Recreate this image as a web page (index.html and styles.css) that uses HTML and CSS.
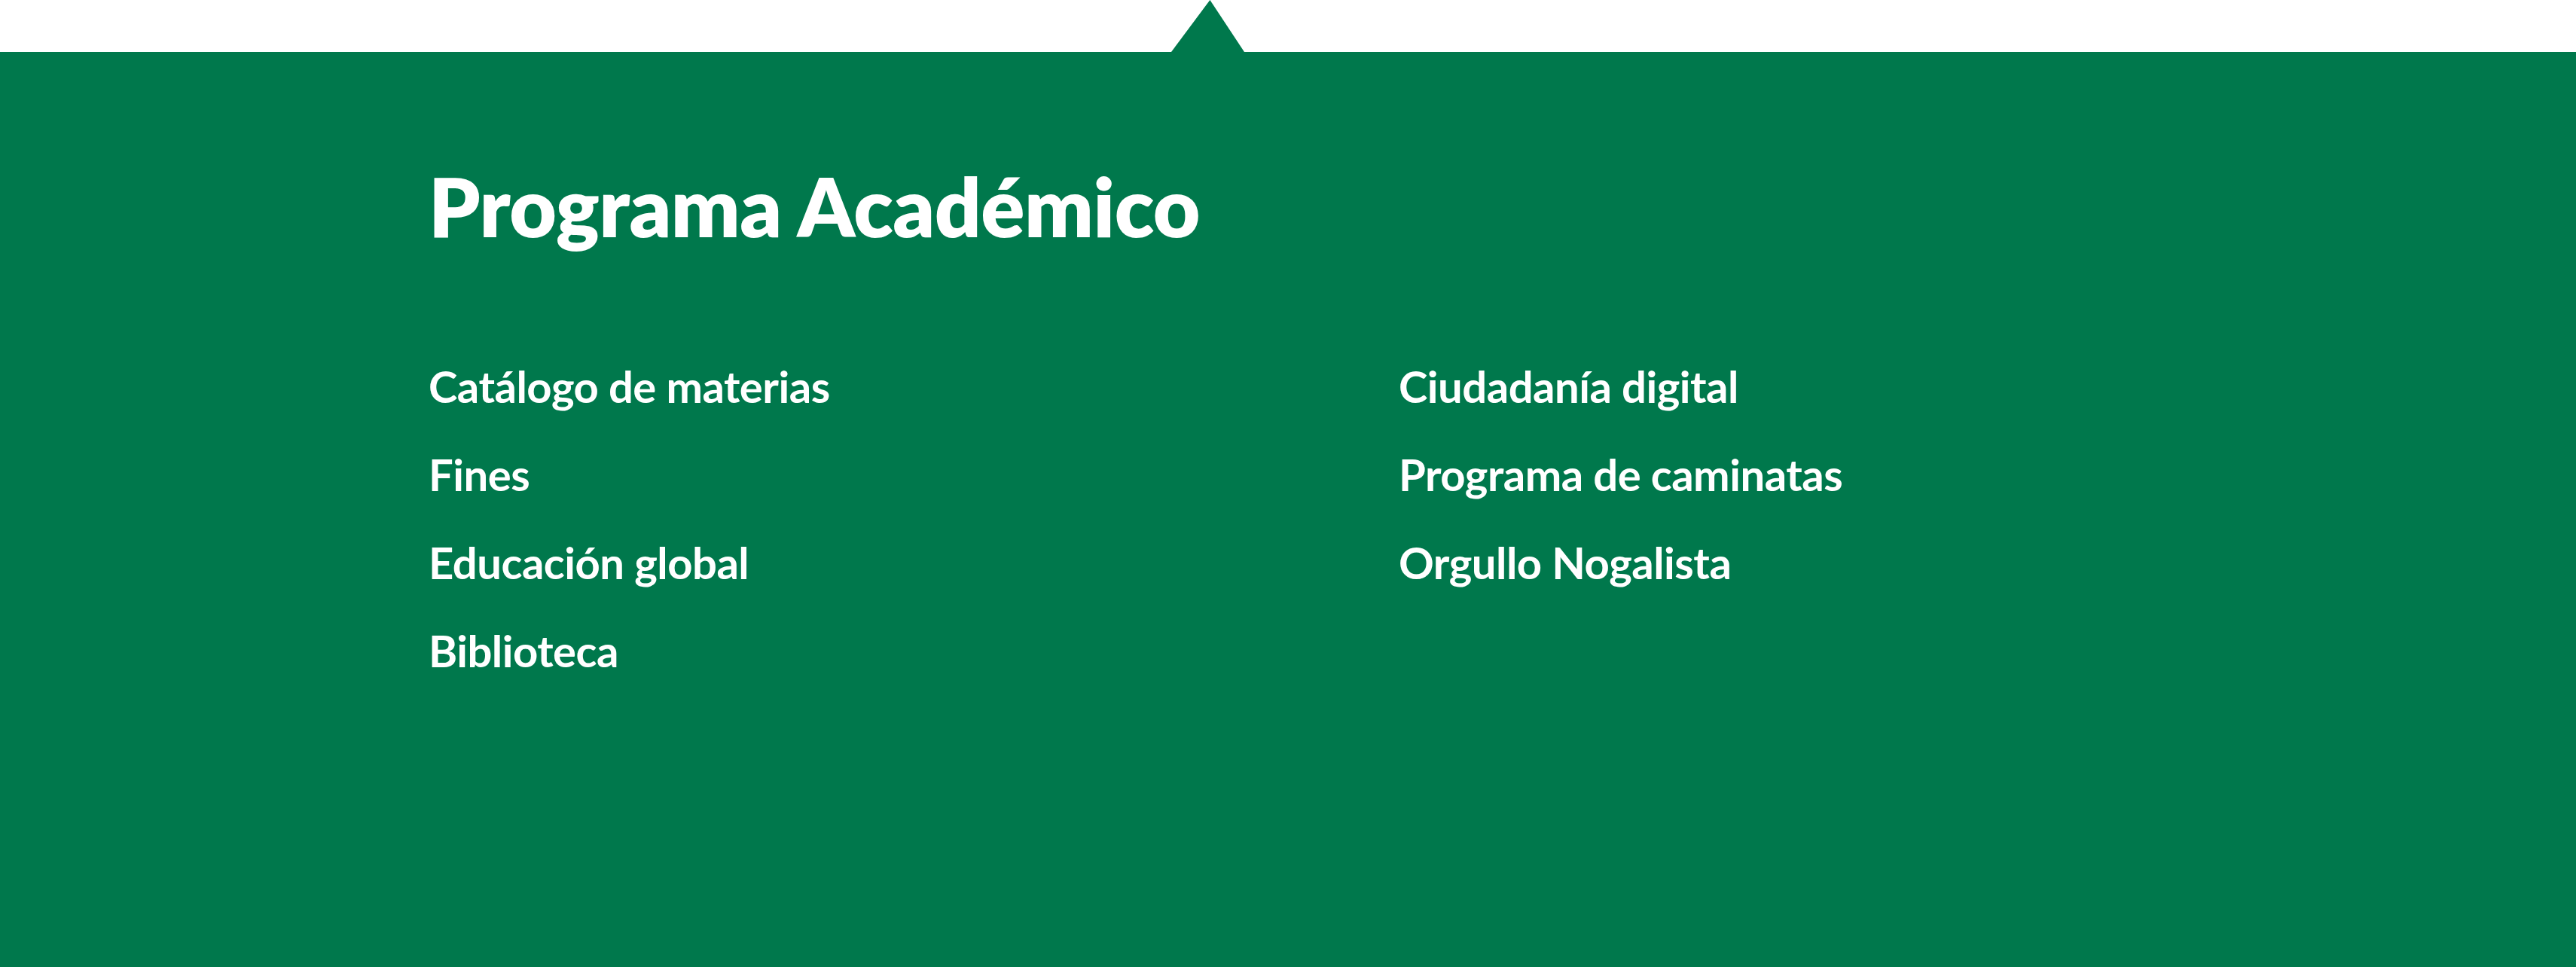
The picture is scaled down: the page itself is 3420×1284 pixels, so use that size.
FILE: index.html
```html
<!DOCTYPE html>
<html lang="es">
<head>
<meta charset="utf-8">
<title>Programa Académico</title>
<link rel="stylesheet" href="styles.css">
</head>
<body>
<div class="topbar">
  <span class="notch"></span>
</div>
<section class="panel">
  <div class="inner">
    <h2 class="title">Programa Académico</h2>
    <div class="links">
      <ul class="col">
        <li><a href="#">Catálogo de materias</a></li>
        <li><a href="#">Fines</a></li>
        <li><a href="#">Educación global</a></li>
        <li><a href="#">Biblioteca</a></li>
      </ul>
      <ul class="col">
        <li><a href="#">Ciudadanía digital</a></li>
        <li><a href="#">Programa de caminatas</a></li>
        <li><a href="#">Orgullo Nogalista</a></li>
      </ul>
    </div>
  </div>
</section>
</body>
</html>
```

FILE: styles.css
```css
html, body {
  margin: 0;
  padding: 0;
  background: #ffffff;
  font-family: Lato, "Open Sans", "Liberation Sans", sans-serif;
}

.topbar {
  position: relative;
  height: 69px;
  background: #ffffff;
}

.notch {
  position: absolute;
  left: 1555px;
  bottom: 0;
  width: 97px;
  height: 69px;
  background: #00784c;
  clip-path: polygon(0 100%, 53% 0, 100% 100%);
}

.panel {
  background: #00784c;
  height: 1215px;
  box-sizing: border-box;
  padding: 150px 0 0 569px;
}

.title {
  margin: 0;
  color: #ffffff;
  font-size: 108px;
  line-height: 1;
  font-weight: 800;
  letter-spacing: -0.5px;
}

.links {
  display: grid;
  grid-template-columns: 1288px 1fr;
  margin-top: 157px;
}

.col {
  list-style: none;
  margin: 0;
  padding: 0;
  display: flex;
  flex-direction: column;
  gap: 59px;
}

.col a {
  display: block;
  color: #ffffff;
  text-decoration: none;
  font-size: 58px;
  line-height: 1;
  font-weight: 700;
  letter-spacing: -0.5px;
}
```
